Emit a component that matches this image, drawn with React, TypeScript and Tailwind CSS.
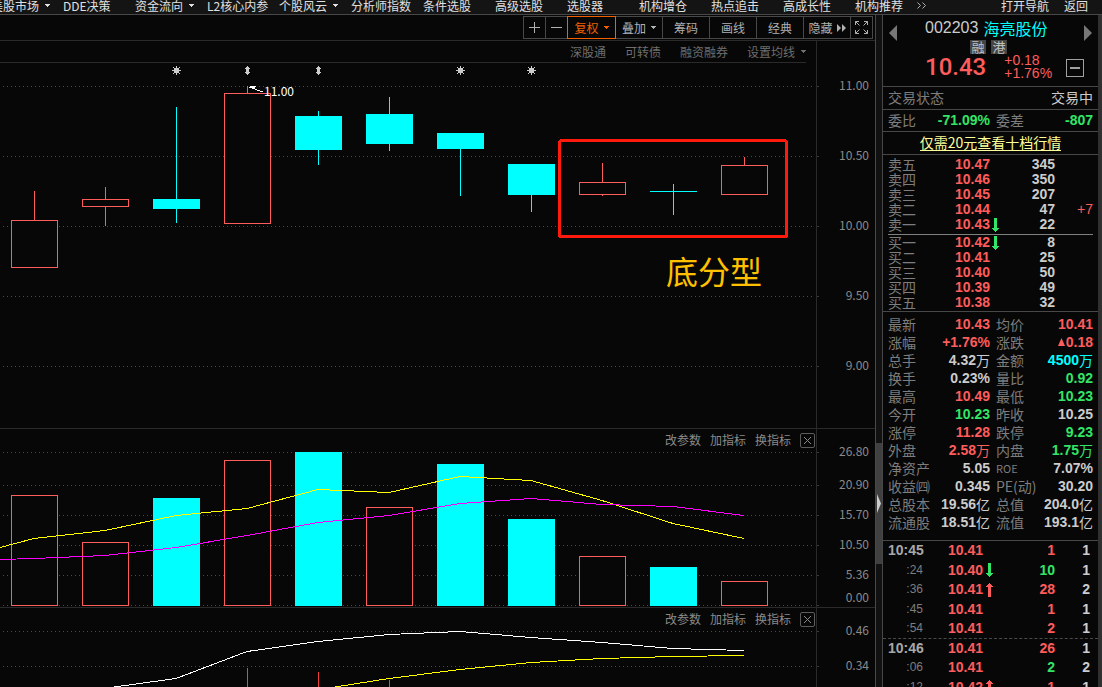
import type { ReactNode } from 'react'

type Tone = 'red' | 'green' | 'cyan' | 'white'

interface Candle {
  high: number
  top: number
  bottom: number
  low: number
  up: boolean
  volume: number
}

const tones: Record<Tone, string> = {
  red: 'text-[#ff5c5c]',
  green: 'text-[#33e566]',
  cyan: 'text-[#00ffff]',
  white: 'text-[#cccccc]',
}

const RED = '#ff5c5c'
const CYAN = '#00ffff'
const STEP = 71
const FIRST = 34

const menu = [
  { label: '美股市场', caret: true },
  { label: 'DDE决策' },
  { label: '资金流向', caret: true },
  { label: 'L2核心内参' },
  { label: '个股风云', caret: true },
  { label: '分析师指数' },
  { label: '条件选股' },
  { label: '高级选股' },
  { label: '选股器' },
  { label: '机构增仓' },
  { label: '热点追击' },
  { label: '高成长性' },
]

// y values are pixels inside the price panel, volume is the bar height
const candles: Candle[] = [
  { high: 128, top: 157, bottom: 204, low: 204, up: true, volume: 110 },
  { high: 124, top: 136, bottom: 143, low: 163, up: true, volume: 63 },
  { high: 44, top: 136, bottom: 146, low: 159, up: false, volume: 108 },
  { high: 23, top: 30, bottom: 160, low: 160, up: true, volume: 145 },
  { high: 48, top: 53, bottom: 87, low: 101, up: false, volume: 154 },
  { high: 34, top: 51, bottom: 81, low: 87, up: false, volume: 98 },
  { high: 70, top: 70, bottom: 86, low: 132, up: false, volume: 142 },
  { high: 101, top: 101, bottom: 132, low: 148, up: false, volume: 87 },
  { high: 100, top: 119, bottom: 131, low: 133, up: true, volume: 49 },
  { high: 121, top: 128, bottom: 129, low: 151, up: false, volume: 39 },
  { high: 94, top: 102, bottom: 131, low: 131, up: true, volume: 24 },
]

// volume bars are coloured against the previous close
const hollowVolumes = [0, 1, 3, 5, 8, 10]

const asks = [
  { label: '卖五', price: '10.47', qty: '345' },
  { label: '卖四', price: '10.46', qty: '350' },
  { label: '卖三', price: '10.45', qty: '207' },
  { label: '卖二', price: '10.44', qty: '47', diff: '+7' },
  { label: '卖一', price: '10.43', qty: '22', down: true },
]

const bids = [
  { label: '买一', price: '10.42', qty: '8', down: true },
  { label: '买二', price: '10.41', qty: '25' },
  { label: '买三', price: '10.40', qty: '50' },
  { label: '买四', price: '10.39', qty: '49' },
  { label: '买五', price: '10.38', qty: '32' },
]

const stats: [string, string, Tone, string, string, Tone][] = [
  ['最新', '10.43', 'red', '均价', '10.41', 'red'],
  ['涨幅', '+1.76%', 'red', '涨跌', '▲0.18', 'red'],
  ['总手', '4.32万', 'white', '金额', '4500万', 'cyan'],
  ['换手', '0.23%', 'white', '量比', '0.92', 'green'],
  ['最高', '10.49', 'red', '最低', '10.23', 'green'],
  ['今开', '10.23', 'green', '昨收', '10.25', 'white'],
  ['涨停', '11.28', 'red', '跌停', '9.23', 'green'],
  ['外盘', '2.58万', 'red', '内盘', '1.75万', 'green'],
  ['净资产', '5.05', 'white', 'ROE', '7.07%', 'white'],
  ['收益㈣', '0.345', 'white', 'PE(动)', '30.20', 'white'],
  ['总股本', '19.56亿', 'white', '总值', '204.0亿', 'white'],
  ['流通股', '18.51亿', 'white', '流值', '193.1亿', 'white'],
]

const ticks: { time: string; price: string; dir?: 'up' | 'down'; qty: string; tone: Tone; count: string }[] = [
  { time: '10:45', price: '10.41', qty: '1', tone: 'red', count: '1' },
  { time: ':24', price: '10.40', dir: 'down', qty: '10', tone: 'green', count: '1' },
  { time: ':36', price: '10.41', dir: 'up', qty: '28', tone: 'red', count: '2' },
  { time: ':45', price: '10.41', qty: '1', tone: 'red', count: '1' },
  { time: ':54', price: '10.41', qty: '2', tone: 'red', count: '1' },
  { time: '10:46', price: '10.41', qty: '26', tone: 'red', count: '1' },
  { time: ':06', price: '10.41', qty: '2', tone: 'green', count: '2' },
  { time: ':12', price: '10.42', dir: 'up', qty: '1', tone: 'red', count: '1' },
]

function Caret() {
  return (
    <svg className="w-[6px] h-[3px] shrink-0" viewBox="0 0 6 3" fill="currentColor" shapeRendering="crispEdges">
      <path d="M0 0h6L3 3z" />
    </svg>
  )
}

function Arrow({ dir }: { dir: 'up' | 'down' }) {
  return (
    <svg
      className={dir === 'up' ? 'w-[7px] h-[14px] text-[#ff5c5c]' : 'w-[7px] h-[14px] rotate-180 text-[#33e566]'}
      viewBox="0 0 7 14"
      fill="currentColor"
      shapeRendering="crispEdges"
    >
      <path d="M3 0h1v1h1v1h1v1h1v1H5v10H2V4H0V3h1V2h1V1h1z" />
    </svg>
  )
}

// digits are bold, the 万 / 亿 unit is not
function Value({ text, tone }: { text: string; tone: Tone }) {
  const unit = /[万亿]$/.test(text) ? text.slice(-1) : ''
  const up = text.startsWith('▲')
  const digits = text.slice(up ? 1 : 0, unit ? -1 : undefined)
  return (
    <span className={`flex items-center justify-end ${tones[tone]}`}>
      {up && (
        <svg className="w-[7px] h-[8px] mr-px" viewBox="0 0 7 8" fill="currentColor">
          <path d="M3.500 0L7 8H0z" />
        </svg>
      )}
      <b className="font-[Liberation_Sans]">{digits}</b>
      {unit}
    </span>
  )
}

function ToolButton({ children, active, label, wide }: { children: ReactNode; active?: boolean; label?: string; wide?: boolean }) {
  return (
    <button
      aria-label={label}
      className={`-ml-px flex h-[23px] items-center justify-center gap-[4px] border ${wide ? 'w-[48px]' : 'w-[23px]'} ${
        active ? 'relative w-[49px] border-[#f26000] text-[#f26000]' : 'border-[#484848] text-[#b0b0b0]'
      }`}
    >
      {children}
    </button>
  )
}

function PanelTools() {
  return (
    <div className="flex h-[22px] items-center justify-end gap-[9px] pr-px text-[#8a8a8a]">
      <button>改参数</button>
      <button>加指标</button>
      <button>换指标</button>
      <button aria-label="关闭" className="flex size-[15px] items-center justify-center rounded-[2px] border border-[#5c5c5c]">
        <svg className="size-[7px]" viewBox="0 0 7 7" stroke="currentColor">
          <path d="M0 0L7 7M7 0L0 7" />
        </svg>
      </button>
    </div>
  )
}

function GridLines({ rows }: { rows: number[] }) {
  return (
    <g stroke="#4a4a4a" strokeDasharray="1 3">
      {rows.map((y) => (
        <line key={y} x1={-2001} x2={814} y1={y + 0.5} y2={y + 0.5} />
      ))}
    </g>
  )
}

function Axis({ height, rows }: { height: number; rows: [number, string, number?][] }) {
  return (
    <svg
      className="w-[58px] shrink-0 self-start font-['Noto_Sans_CJK_SC',sans-serif]"
      height={height}
      viewBox={`0 0 58 ${height}`}
      fontSize={12}
    >
      {rows.map(([y, text, labelY]) => (
        <g key={text}>
          <rect x={0} y={y} width={2} height={1} fill="#3a3a3a" />
          <text x={52} y={(labelY ?? y) + 4} textAnchor="end" fill="#8a8a8a">
            {text}
          </text>
        </g>
      ))}
    </svg>
  )
}

function Sun({ x }: { x: number }) {
  return (
    <path
      transform={`translate(${x - 4} 3)`}
      fill="#cccccc"
      d="M2 2h5v5H2zM4 0h1v9H4zM0 4h9v1H0zM1 1h1v1H1zM7 1h1v1H7zM1 7h1v1H1zM7 7h1v1H7z"
    />
  )
}

function Diamond({ x }: { x: number }) {
  return <path transform={`translate(${x - 2} 3)`} fill="#cccccc" d="M2 0h1v1h1v1h1v1H4v3h1v1H4v1H3v1H2V8H1V7H0V6h1V3H0V2h1V1h1z" />
}

function PriceChart() {
  return (
    <svg
      className="block h-[365px] w-full font-['Noto_Sans_CJK_SC',sans-serif]"
      viewBox="0 0 816 365"
      preserveAspectRatio="xMaxYMin meet"
      fill="none"
      shapeRendering="crispEdges"
    >
      <GridLines rows={[23, 93, 163, 233, 303]} />
      <Sun x={176} />
      <Diamond x={247} />
      <Diamond x={318} />
      <Sun x={460} />
      <Sun x={531} />
      {candles.map((c, i) => {
        const x = FIRST + i * STEP
        const color = c.up ? RED : CYAN
        return (
          <g key={i}>
            <rect x={x} y={c.high} width={1} height={c.top - c.high} fill={color} />
            <rect x={x} y={c.bottom} width={1} height={c.low - c.bottom + (c.up ? 0 : 1)} fill={color} />
            {c.up ? (
              <rect x={x - 22.5} y={c.top + 0.5} width={46} height={c.bottom - c.top} stroke={RED} fill="#070707" />
            ) : (
              <rect x={x - 23} y={c.top} width={47} height={c.bottom - c.top} fill={CYAN} />
            )}
          </g>
        )
      })}
      <path d="M249 24l14 5" stroke="#ffffff" />
      <path d="M249 23h7l-3 4z" fill="#ffffff" />
      <text x={264} y={33} fontSize={12} fill="#ffffff">
        11.00
      </text>
      <rect x={559.5} y={77.5} width={227} height={96} rx={2} stroke="#ff1a0d" strokeWidth={3} />
      <text x={666} y={221} fontSize={32} fill="#ffc000">
        底分型
      </text>
    </svg>
  )
}

function VolumeChart() {
  return (
    <svg
      className="block h-[156px] w-full"
      viewBox="0 0 816 156"
      preserveAspectRatio="xMaxYMin meet"
      fill="none"
      shapeRendering="crispEdges"
    >
      <GridLines rows={[1, 34, 64, 94, 124, 154]} />
      {candles.map((c, i) => {
        const x = FIRST + i * STEP
        return hollowVolumes.includes(i) ? (
          <rect key={i} x={x - 22.5} y={154.5 - c.volume} width={46} height={c.volume} stroke={RED} fill="#070707" />
        ) : (
          <rect key={i} x={x - 23} y={155 - c.volume} width={47} height={c.volume} fill={CYAN} />
        )
      })}
      <polyline
        stroke="#ffff00"
        points="0,96.5 34,87.5 105,79.5 176,64.5 247,57.5 318,38.5 389,41.500 460,25.5 531,29.5 602,49.5 673,72.5 744,87.5"
      />
      <polyline
        stroke="#ff00ff"
        points="0,108.5 34,107.5 105,104.5 176,96.5 247,84.5 318,71.5 389,64.5 460,52.5 531,47.5 602,53.5 673,55.5 744,64.5"
      />
    </svg>
  )
}

function TrendChart() {
  return (
    <svg
      className="block h-[57px] w-full"
      viewBox="0 0 816 57"
      preserveAspectRatio="xMaxYMin meet"
      fill="none"
      shapeRendering="crispEdges"
    >
      <GridLines rows={[1, 36]} />
      <path d="M247.500 38V57M318.500 42V57M389.500 50V57" stroke="#f04040" />
      <polyline
        stroke="#ffffff"
        points="114,57 176,48.5 247,21.5 318,11.5 389,4.500 460,1.500 531,7.500 602,12.5 673,18.5 744,20.5"
      />
      <polyline stroke="#ffff00" points="335,57 389,48.5 460,39.5 531,32.5 602,28.5 673,26.5 744,25.5" />
    </svg>
  )
}

function BookRow({ row }: { row: { label: string; price: string; qty: string; diff?: string; down?: boolean } }) {
  return (
    <div className="grid h-[15px] grid-cols-[40px_62px_9px_minmax(0,1fr)_38px] items-center">
      <span className="text-[#7d7d7d]">{row.label}</span>
      <b className="text-right font-[Liberation_Sans] text-[#ff5c5c]">{row.price}</b>
      <span className="flex justify-end">{row.down && <Arrow dir="down" />}</span>
      <b className="text-right font-[Liberation_Sans] text-[#cccccc]">{row.qty}</b>
      <span className="text-right font-[Liberation_Sans] text-[#ff5c5c]">{row.diff}</span>
    </div>
  )
}

function QuotePanel() {
  return (
    <aside className="w-[220px] shrink-0 overflow-hidden border-r-4 border-l border-r-[#303030] border-l-[#484848] text-[14px] leading-[15px]">
      <div className="grid h-[72px] grid-cols-[36px_minmax(0,1fr)_26px] border-b border-[#484848] px-[6px] pt-[3px]">
        <button aria-label="上一只" className="self-start pt-[7px] text-[#777777]">
          <svg className="h-[16px] w-[8px]" viewBox="0 0 8 16" fill="currentColor">
            <path d="M8 0v16L0 8z" />
          </svg>
        </button>
        <div>
          <h1 className="flex gap-[5px] text-[16px] leading-[20px] whitespace-nowrap">
            <span className="font-[Liberation_Sans] text-[#cccccc]">002203</span>
            <span className="text-[#00ffff]">海亮股份</span>
          </h1>
          <div className="mt-[2px] flex gap-[5px] pl-[45px] text-[13px] leading-[14px] text-[#c0c0c0]">
            <span className="w-[16px] bg-[#444444] text-center">融</span>
            <span className="w-[16px] bg-[#444444] text-center">港</span>
          </div>
          <div className="flex items-center gap-[18px] whitespace-nowrap text-[#ff5c5c]">
            <span className="font-[Roboto] text-[24px] leading-[26px] font-medium">10.43</span>
            <span className="font-[Liberation_Sans] leading-[13px]">
              +0.18
              <br />
              +1.76%
            </span>
          </div>
        </div>
        <div className="flex flex-col items-end justify-between pb-[9px] text-[#777777]">
          <button aria-label="下一只" className="pt-[7px]">
            <svg className="h-[16px] w-[8px]" viewBox="0 0 8 16" fill="currentColor">
              <path d="M0 0v16l8-8z" />
            </svg>
          </button>
          <button aria-label="收起" className="mr-[8px] flex size-[18px] items-center justify-center border border-[#a0a0a0]">
            <span className="h-[2px] w-[10px] bg-[#a0a0a0]" />
          </button>
        </div>
      </div>
      <div className="flex h-[23px] items-center justify-between border-b border-[#484848] px-[5px] pb-px text-[#7d7d7d]">
        <span>交易状态</span>
        <span className="text-[#cccccc]">交易中</span>
      </div>
      <div className="grid h-[22px] grid-cols-[30px_72px_minmax(0,1fr)_60px] items-center border-b border-[#484848] px-[5px] text-[#7d7d7d]">
        <span>委比</span>
        <Value text="-71.09%" tone="green" />
        <span className="pl-[6px]">委差</span>
        <Value text="-807" tone="green" />
      </div>
      <div className="flex h-[23px] items-center justify-center border-b border-[#484848]">
        <a href="#level2" className="border-b border-[#ffff99] leading-[15px] text-[#ffff99]">
          仅需20元查看十档行情
        </a>
      </div>
      <div className="border-b border-[#484848] px-[5px] pt-[2px] pb-px">
        {asks.map((row) => (
          <BookRow key={row.label} row={row} />
        ))}
        <div className="mt-[2px] border-t border-[#808080]" />
        {bids.map((row) => (
          <BookRow key={row.label} row={row} />
        ))}
      </div>
      <div className="border-b border-[#484848] px-[5px] pt-[3px] pb-[9px]">
        {stats.map(([label, value, tone, label2, value2, tone2]) => (
          <div
            key={label}
            className="grid h-[18px] grid-cols-[42px_60px_minmax(0,1fr)_54px] items-center whitespace-nowrap text-[#7d7d7d]"
          >
            <span>{label}</span>
            <Value text={value} tone={tone} />
            <span className={label2 === 'ROE' ? 'pl-[6px] text-[11px]' : 'pl-[6px]'}>{label2}</span>
            <Value text={value2} tone={tone2} />
          </div>
        ))}
      </div>
      <div className="font-[Liberation_Sans]">
        {ticks.map((t, i) => (
          <div
            key={i}
            className={`grid h-[19px] grid-cols-[35px_60px_10px_minmax(0,1fr)_35px] items-center pr-[8px] pl-[5px] even:h-[20px] ${
              t.time === '10:46' ? 'border-t border-dashed border-[#4a4a4a]' : ''
            }`}
          >
            <span className={t.time[0] === ':' ? 'text-right text-[12px] text-[#7d7d7d]' : 'font-bold text-[#a8a8a8]'}>{t.time}</span>
            <b className="text-right text-[#ff5c5c]">{t.price}</b>
            <span className="flex justify-end">{t.dir && <Arrow dir={t.dir} />}</span>
            <b className={`text-right ${tones[t.tone]}`}>{t.qty}</b>
            <b className="text-right text-[#cccccc]">{t.count}</b>
          </div>
        ))}
      </div>
    </aside>
  )
}

export default function App() {
  return (
    <div className="flex h-screen flex-col overflow-hidden bg-[#070707] font-['Noto_Sans_CJK_SC',sans-serif] text-[12px] leading-[14px]">
      {/* Top menu */}
      <header className="flex h-[15px] shrink-0 justify-between border-b border-[#484848] bg-[#141414] pr-[14px] leading-[10px] whitespace-nowrap text-[#e0e0e0]">
        <nav className="-ml-[9px] flex">
          {menu.map((item) => (
            <a key={item.label} href="#menu" className="flex h-[11px] w-[72px] shrink-0 items-center gap-[5px]">
              {item.label}
              {item.caret && <Caret />}
            </a>
          ))}
          <a href="#menu" className="flex h-[11px] items-center">机构推荐</a>
          <button aria-label="更多" className="ml-[14px] flex h-[11px] items-center text-[#b0b0b0]">
            <svg className="h-[7px] w-[10px]" viewBox="0 0 10 7" fill="none" stroke="currentColor">
              <path d="M0.500 0.500l3 3-3 3M5.500 0.500l3 3-3 3" />
            </svg>
          </button>
        </nav>
        <div className="flex h-[11px] items-center gap-[15px]">
          <a href="#nav">打开导航</a>
          <a href="#back">返回</a>
        </div>
      </header>

      <div className="flex min-h-0 flex-1">
        {/* Charts */}
        <main className="flex min-w-0 flex-1 flex-col border-r border-[#484848]">
          <div className="flex h-[26px] shrink-0 items-start justify-end border-b border-[#2a2a2a] pt-px pr-[2px]">
            <ToolButton label="放大">
              <svg className="size-[11px]" viewBox="0 0 11 11" fill="currentColor"><path d="M5 0h1v5h5v1H6v5H5V6H0V5h5z" /></svg>
            </ToolButton>
            <ToolButton label="缩小">
              <svg className="size-[11px]" viewBox="0 0 11 11" fill="currentColor"><path d="M0 5h11v1H0z" /></svg>
            </ToolButton>
            <ToolButton active wide>复权<Caret /></ToolButton>
            <ToolButton wide>叠加<Caret /></ToolButton>
            <ToolButton wide>筹码</ToolButton>
            <ToolButton wide>画线</ToolButton>
            <ToolButton wide>经典</ToolButton>
            <ToolButton wide>
              隐藏
              <svg className="h-[8px] w-[9px] shrink-0" viewBox="0 0 9 8" fill="currentColor"><path d="M0 0l4 4-4 4zM5 0l4 4-4 4z" /></svg>
            </ToolButton>
            <ToolButton label="全屏">
              <svg className="size-[13px] shrink-0" viewBox="0 0 13 13" fill="none" stroke="currentColor">
                <path d="M.5 4V.5H4M.5.5l4 4M9 .5h3.500V4M12.500.5l-4 4M.5 9v3.500H4M.5 12.500l4-4M9 12.500h3.500V9M12.500 12.500l-4-4" />
              </svg>
            </ToolButton>
          </div>

          <section className="flex shrink-0 border-b border-[#2a2a2a]">
            <div className="min-w-0 flex-1">
              <div className="mr-[10px] flex h-[22px] items-center justify-end gap-[19px] border-b border-[#2a2a2a] text-[#6e6e6e]">
                <a href="#sgt">深股通</a>
                <a href="#kzz">可转债</a>
                <a href="#rzrq">融资融券</a>
                <button className="flex items-center gap-[5px]">
                  设置均线
                  <Caret />
                </button>
              </div>
              <PriceChart />
            </div>
            <div className="w-px bg-[#2a2a2a]" />
            <Axis
              height={387}
              rows={[
                [45, '11.00'],
                [115, '10.50'],
                [185, '10.00'],
                [255, '9.50'],
                [325, '9.00'],
              ]}
            />
          </section>

          <section className="flex shrink-0 border-b border-[#2a2a2a]">
            <div className="min-w-0 flex-1">
              <PanelTools />
              <VolumeChart />
            </div>
            <div className="w-px bg-[#2a2a2a]" />
            <Axis
              height={178}
              rows={[
                [23, '26.80'],
                [56, '20.90'],
                [86, '15.70'],
                [116, '10.50'],
                [146, '5.36'],
                [176, '0.00', 169],
              ]}
            />
          </section>

          <section className="flex flex-1">
            <div className="min-w-0 flex-1">
              <PanelTools />
              <TrendChart />
            </div>
            <div className="w-px bg-[#2a2a2a]" />
            <Axis
              height={79}
              rows={[
                [23, '0.46'],
                [58, '0.34'],
              ]}
            />
          </section>
        </main>

        {/* Splitter */}
        <div className="flex w-[6px] shrink-0 flex-col bg-[#111111]">
          <div className="mt-[428px] flex h-[121px] items-center justify-center bg-[#404040]">
            <svg className="h-[19px] w-[4px]" viewBox="0 0 4 19" fill="#cccccc">
              <path d="M0 0l4 9.500L0 19z" />
            </svg>
          </div>
        </div>

        <QuotePanel />
      </div>
    </div>
  )
}
